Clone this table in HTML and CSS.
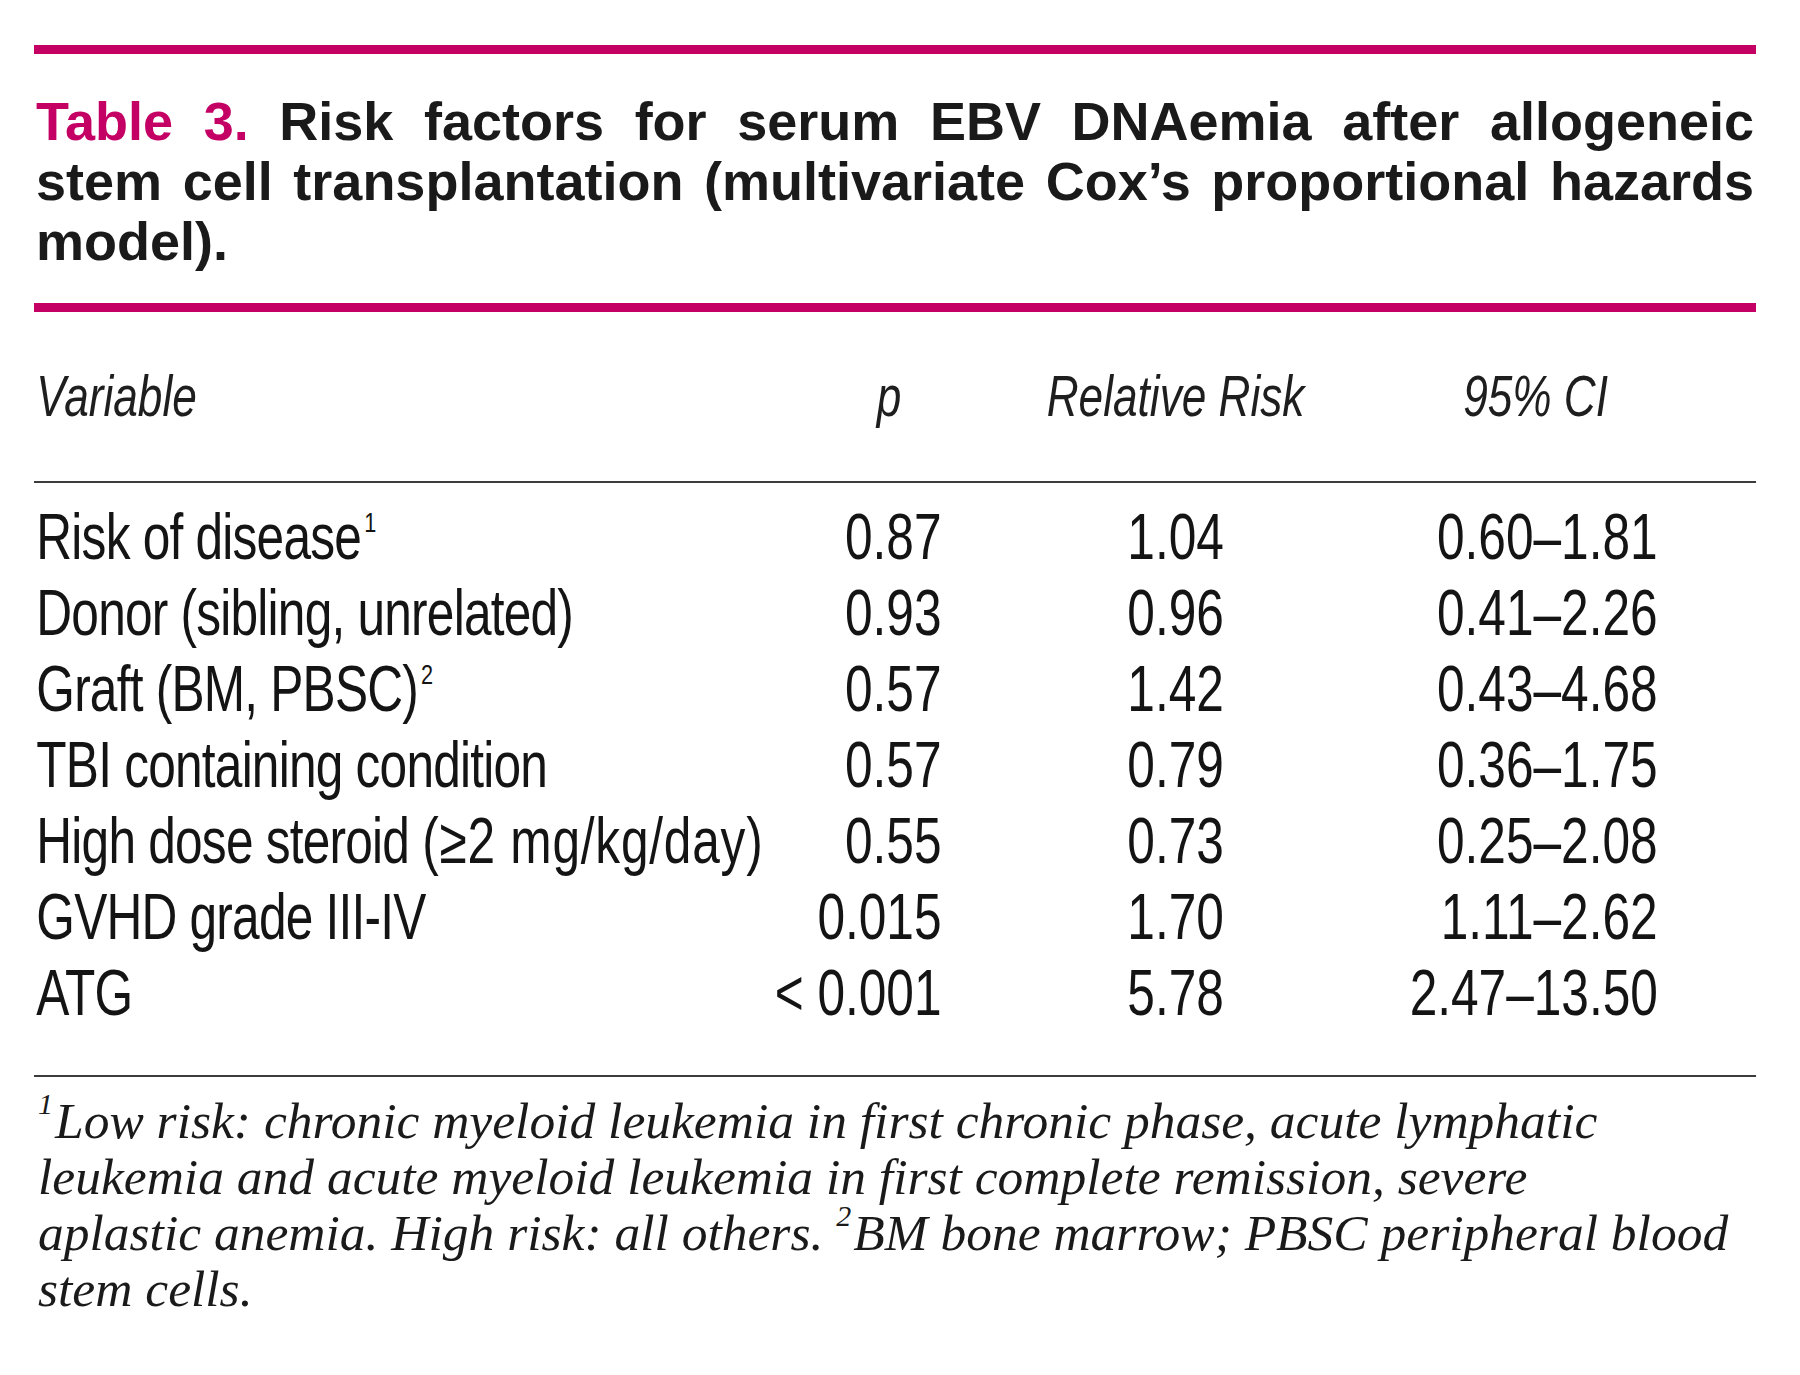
FILE: index.html
```html
<!DOCTYPE html>
<html lang="en">
<head>
<meta charset="utf-8">
<title>Table 3</title>
<link rel="stylesheet" href="styles.css">
</head>
<body>
<div class="page">
  <div class="bar"></div>
  <h1 class="title">
    <span class="line jl"><span class="lbl">Table 3.</span> Risk factors for serum EBV DNAemia after allogeneic</span>
    <span class="line jl">stem cell transplantation (multivariate Cox’s proportional hazards</span>
    <span class="line">model).</span>
  </h1>
  <div class="bar"></div>

  <div class="table-wrap">
    <div class="table">
      <div class="row head">
        <div class="c var">Variable</div>
        <div class="c p">p</div>
        <div class="c rr">Relative Risk</div>
        <div class="c ci">95% CI</div>
      </div>
      <div class="rule rule-head"></div>
      <div class="row">
        <div class="c var">Risk of disease<span class="sup">1</span></div>
        <div class="c p">0.87</div>
        <div class="c rr">1.04</div>
        <div class="c ci">0.60–1.81</div>
      </div>
      <div class="row">
        <div class="c var">Donor (sibling, unrelated)</div>
        <div class="c p">0.93</div>
        <div class="c rr">0.96</div>
        <div class="c ci">0.41–2.26</div>
      </div>
      <div class="row">
        <div class="c var">Graft (BM, PBSC)<span class="sup">2</span></div>
        <div class="c p">0.57</div>
        <div class="c rr">1.42</div>
        <div class="c ci">0.43–4.68</div>
      </div>
      <div class="row">
        <div class="c var">TBI containing condition</div>
        <div class="c p">0.57</div>
        <div class="c rr">0.79</div>
        <div class="c ci">0.36–1.75</div>
      </div>
      <div class="row">
        <div class="c var">High dose steroid <span class="wide">(≥2 mg/kg/day)</span></div>
        <div class="c p">0.55</div>
        <div class="c rr">0.73</div>
        <div class="c ci">0.25–2.08</div>
      </div>
      <div class="row">
        <div class="c var">GVHD grade III-IV</div>
        <div class="c p">0.015</div>
        <div class="c rr">1.70</div>
        <div class="c ci">1.11–2.62</div>
      </div>
      <div class="row">
        <div class="c var">ATG</div>
        <div class="c p">&lt; 0.001</div>
        <div class="c rr">5.78</div>
        <div class="c ci">2.47–13.50</div>
      </div>
      <div class="rule rule-foot"></div>
    </div>
  </div>

  <p class="note"><span class="nsup">1</span>Low risk: chronic myeloid leukemia in first chronic phase, acute lymphatic<br>leukemia and acute myeloid leukemia in first complete remission, severe<br>aplastic anemia. High risk: all others. <span class="nsup">2</span>BM bone marrow; PBSC peripheral blood<br>stem cells.</p>
</div>
</body>
</html>
```

FILE: styles.css
```css
html, body {
  margin: 0;
  padding: 0;
  background: #ffffff;
}

.page {
  width: 1722px;
  padding: 45px 0 0 34px;
  color: #161616;
}

.bar {
  height: 9px;
  background: #c50064;
}

.title {
  margin: 37px 0 32px;
  padding: 0 2px;
  font-family: "Liberation Sans", Arial, sans-serif;
  font-weight: 700;
  font-size: 54px;
  line-height: 60px;
  color: #1a1a1a;
  text-align: justify;
}

.line {
  display: block;
}

.jl {
  text-align-last: justify;
}

.lbl {
  color: #c50064;
}

/* The table face is a condensed grotesque: the block is drawn
   with a regular grotesque and compressed horizontally. */
.table-wrap {
  width: 1722px;
  overflow: visible;
}

.table {
  width: 2222px;
  transform: scaleX(0.775);
  transform-origin: 0 0;
  font-family: "Liberation Sans", Arial, sans-serif;
  color: #141414;
}

.row {
  display: grid;
  grid-template-columns: 883px 285px 604px 320px 1fr;
  padding-left: 3px;
  height: 76px;
  font-size: 64px;
  line-height: 76px;
  white-space: nowrap;
}

.row.head {
  margin-top: 49px;
  height: 70px;
  font-size: 57px;
  line-height: 70px;
  font-style: italic;
  color: #1e1e1e;
}

.row .c.var {
  letter-spacing: -1px;
}

.row.head .c.var {
  letter-spacing: 0;
}

.wide {
  letter-spacing: 1px;
}

.c.p {
  text-align: right;
}

.c.rr {
  text-align: center;
}

.c.ci {
  text-align: right;
}

.head .c.p {
  padding-right: 52px;
}

.head .c.ci {
  padding-right: 64px;
}

.sup {
  font-size: 28px;
  line-height: 0;
  vertical-align: 27px;
  margin-left: 4px;
  letter-spacing: 0;
}

.rule {
  height: 2px;
  background: #3c3c3c;
}

.rule-head {
  margin: 50px 0 16px;
}

.rule-foot {
  margin: 44px 0 0;
}

.note {
  margin: 16px 0 0;
  padding-left: 4px;
  font-family: "Liberation Serif", "Times New Roman", serif;
  font-style: italic;
  font-size: 51.5px;
  line-height: 56px;
  color: #1a1a1a;
}

.nsup {
  font-size: 30px;
  line-height: 0;
  vertical-align: 24px;
  margin-right: 2px;
}
```
